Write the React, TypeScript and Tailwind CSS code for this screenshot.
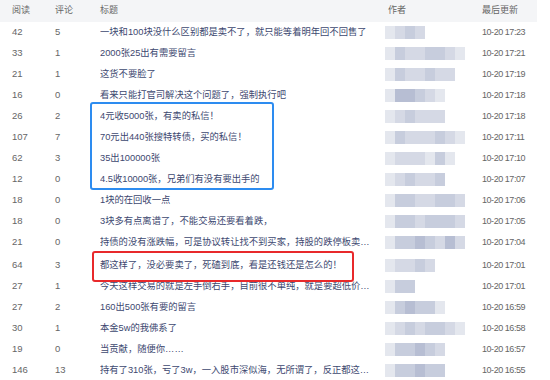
import React from "react";

type Row = {
  reads: number;
  replies: number;
  title: string;
  time: string;
  author: number[];
};

// mosaic shades used for the blurred author names
const SHADES = ["#f3f4f7", "#e4e7ee", "#d5d9e5", "#c7cddd", "#b7bed3"];

const rows: Row[] = [
  { reads: 42, replies: 5, title: "一块和100块没什么区别都是卖不了，就只能等着明年回不回售了", time: "10-20 17:23", author: [1, 2, 3, 2] },
  { reads: 33, replies: 1, title: "2000张25出有需要留言", time: "10-20 17:21", author: [1, 3, 2, 2, 3, 3, 2, 1] },
  { reads: 21, replies: 1, title: "这货不要脸了", time: "10-20 17:19", author: [1, 3, 2, 2, 3, 2, 2] },
  { reads: 16, replies: 0, title: "看来只能打官司解决这个问题了，强制执行吧", time: "10-20 17:18", author: [1, 4, 4, 3, 2, 1] },
  { reads: 26, replies: 2, title: "4元收5000张，有卖的私信！", time: "10-20 17:18", author: [1, 2, 3, 2, 2, 2] },
  { reads: 107, replies: 7, title: "70元出440张搜特转债，买的私信！", time: "10-20 17:11", author: [1, 3, 2, 2, 2, 3, 2, 1] },
  { reads: 62, replies: 3, title: "35出100000张", time: "10-20 17:10", author: [1, 2, 2, 2, 1, 3, 1] },
  { reads: 12, replies: 0, title: "4.5收10000张，兄弟们有没有要出手的", time: "10-20 17:07", author: [1, 2, 3, 2, 2, 3] },
  { reads: 18, replies: 0, title: "1块的在回收一点", time: "10-20 17:06", author: [1, 3, 3, 2, 2, 3, 3, 2] },
  { reads: 18, replies: 0, title: "3块多有点离谱了，不能交易还要看着跌，", time: "10-20 17:05", author: [1, 3, 3, 2, 3, 3, 3, 2] },
  { reads: 21, replies: 0, title: "持债的没有涨跌幅，可是协议转让找不到买家，持股的跌停板卖不掉", time: "10-20 17:04", author: [1, 3, 3, 4, 3, 2, 4, 2] },
  { reads: 64, replies: 3, title: "都这样了，没必要卖了，死磕到底，看是还钱还是怎么的！", time: "10-20 17:01", author: [1, 2, 2, 3, 2] },
  { reads: 27, replies: 1, title: "今天这样交易的就是左手倒右手，目前很不单纯，就是要超低价收割", time: "10-20 17:01", author: [1, 3, 3] },
  { reads: 27, replies: 2, title: "160出500张有要的留言", time: "10-20 16:59", author: [1, 3, 4, 3, 3, 1] },
  { reads: 30, replies: 1, title: "本金5w的我佛系了", time: "10-20 16:58", author: [1, 2, 3, 2, 3, 3, 2, 1] },
  { reads: 19, replies: 0, title: "当贡献，随便你……", time: "10-20 16:57", author: [1, 3, 3, 4, 3, 2] },
  { reads: 146, replies: 13, title: "持有了310张，亏了3w，一入股市深似海，无所谓了，反正都这样了", time: "10-20 16:55", author: [1, 3, 3, 4, 3, 3] },
];

const font = { fontFamily: '"Liberation Sans", "Noto Sans CJK SC", sans-serif' };

function Author({ cells }: { cells: number[] }) {
  return (
    <div className="flex h-[13px]">
      {cells.map((s, i) => (
        <div key={i} className="w-[10px] h-full" style={{ backgroundColor: SHADES[s] }} />
      ))}
    </div>
  );
}

export default function App() {
  return (
    <div className="relative w-[550px] h-[380px] overflow-hidden bg-white" style={font}>
      <div className="w-[537px]">
        {/* Header */}
        <div className="grid grid-cols-[55px_45px_285px_97px_1fr] items-center h-[22px] bg-[#f4f5f7] text-[9px] text-[#666]">
          <span className="pl-[12px]">阅读</span>
          <span>评论</span>
          <span>标题</span>
          <span className="pl-[3px]">作者</span>
          <span>最后更新</span>
        </div>

        {/* Rows */}
        {rows.map((row, i) => (
          <div
            key={i}
            className={`grid grid-cols-[55px_45px_285px_97px_1fr] items-center h-[21px] text-[9.5px] ${i === 11 ? "mt-[2px]" : ""}`}
          >
            <span className="pl-[12px] text-[#666]">{row.reads}</span>
            <span className="text-[#666]">{row.replies}</span>
            <span className="max-w-[276px] truncate text-[9.3px] text-[#3d4870]">{row.title}</span>
            <Author cells={row.author} />
            <span className="text-[9px] tracking-[-0.45px] text-[#666]">{row.time}</span>
          </div>
        ))}
      </div>

      {/* Annotation boxes */}
      <div className="absolute left-[90px] top-[102px] w-[184px] h-[88px] border-2 border-[#2d8cf0] rounded-[3px]" />
      <div className="absolute left-[92px] top-[251px] w-[262px] h-[31px] border-2 border-[#e8292b] rounded-[3px]" />
    </div>
  );
}
